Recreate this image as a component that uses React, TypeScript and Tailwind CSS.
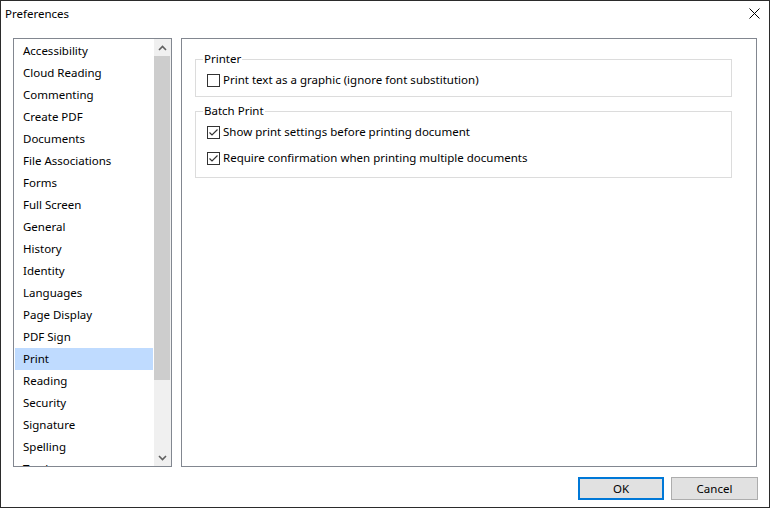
import React from "react";

const items = [
  "Accessibility",
  "Cloud Reading",
  "Commenting",
  "Create PDF",
  "Documents",
  "File Associations",
  "Forms",
  "Full Screen",
  "General",
  "History",
  "Identity",
  "Languages",
  "Page Display",
  "PDF Sign",
  "Print",
  "Reading",
  "Security",
  "Signature",
  "Spelling",
  "Tracker",
];

function Check({ checked }: { checked: boolean }) {
  return (
    <svg width="13" height="13" viewBox="0 0 13 13" className="shrink-0">
      <rect x="0.5" y="0.5" width="12" height="12" fill="#fff" stroke="#333" />
      {checked && (
        <path d="M2.5 6.5 L5 9 L10.5 3.5" fill="none" stroke="#333" strokeWidth="1.2" />
      )}
    </svg>
  );
}

function Row({ checked, children }: { checked: boolean; children: React.ReactNode }) {
  return (
    <div className="flex items-center gap-[3px] pl-[11px] h-[26px]">
      <Check checked={checked} />
      <span>{children}</span>
    </div>
  );
}

export default function App() {
  return (
    <div
      className="w-[770px] h-[508px] border border-[#2b2b2b] bg-white flex flex-col text-[11.5px] text-black overflow-hidden"
      style={{ fontFamily: '"Segoe UI", "Noto Sans", sans-serif' }}
    >
      <div className="h-[25px] flex items-center justify-between pl-[4px] pr-[9px] shrink-0">
        <span>Preferences</span>
        <svg width="11" height="11" viewBox="0 0 11 11">
          <path d="M0.5 0.5 L10.5 10.5 M10.5 0.5 L0.5 10.5" stroke="#000" strokeWidth="1" />
        </svg>
      </div>
      <div className="flex gap-[9px] pl-[12px] pr-[12px] pt-[12px] shrink-0">
        <div className="w-[159px] h-[429px] border border-[#828790] flex overflow-hidden">
          <div className="flex-1 p-[1px] overflow-hidden">
            {items.map((it) => (
              <div
                key={it}
                className={`h-[22px] flex items-center pl-[8px] ${it === "Print" ? "bg-[#bfdbff]" : ""}`}
              >
                {it}
              </div>
            ))}
          </div>
          <div className="w-[17px] bg-[#f0f0f0] flex flex-col shrink-0">
            <div className="h-[17px] flex items-center justify-center">
              <svg width="9" height="6" viewBox="0 0 9 6">
                <path d="M1 5 L4.5 1.5 L8 5" fill="none" stroke="#606060" strokeWidth="1.6" />
              </svg>
            </div>
            <div className="h-[324px] bg-[#cdcdcd] mr-[1px]" />
            <div className="flex-1" />
            <div className="h-[17px] flex items-center justify-center">
              <svg width="9" height="6" viewBox="0 0 9 6">
                <path d="M1 1 L4.5 4.5 L8 1" fill="none" stroke="#606060" strokeWidth="1.6" />
              </svg>
            </div>
          </div>
        </div>
        <div className="w-[576px] h-[429px] border border-[#828790] pl-[13px] pt-[12px]">
          <fieldset className="w-[537px] border border-[#dcdcdc] pb-[3px]">
            <legend className="ml-[7px] px-[1px] leading-[16px]">Printer</legend>
            <Row checked={false}>
              Print text as a <span className="underline">g</span>raphic (ignore font substitution)
            </Row>
          </fieldset>
          <fieldset className="w-[537px] border border-[#dcdcdc] mt-[6px] pb-[6px]">
            <legend className="ml-[7px] px-[1px] leading-[16px]">Batch Print</legend>
            <Row checked={true}>Show print settings before printing document</Row>
            <Row checked={true}>Require confirmation when printing multiple documents</Row>
          </fieldset>
        </div>
      </div>
      <div className="flex justify-end gap-[7px] pr-[11px] pt-[10px]">
        <button className="w-[86px] h-[23px] border-2 border-[#0078d7] bg-[#e1e1e1] flex items-center justify-center">
          OK
        </button>
        <button className="w-[87px] h-[23px] border border-[#adadad] bg-[#e1e1e1] flex items-center justify-center">
          Cancel
        </button>
      </div>
    </div>
  );
}
